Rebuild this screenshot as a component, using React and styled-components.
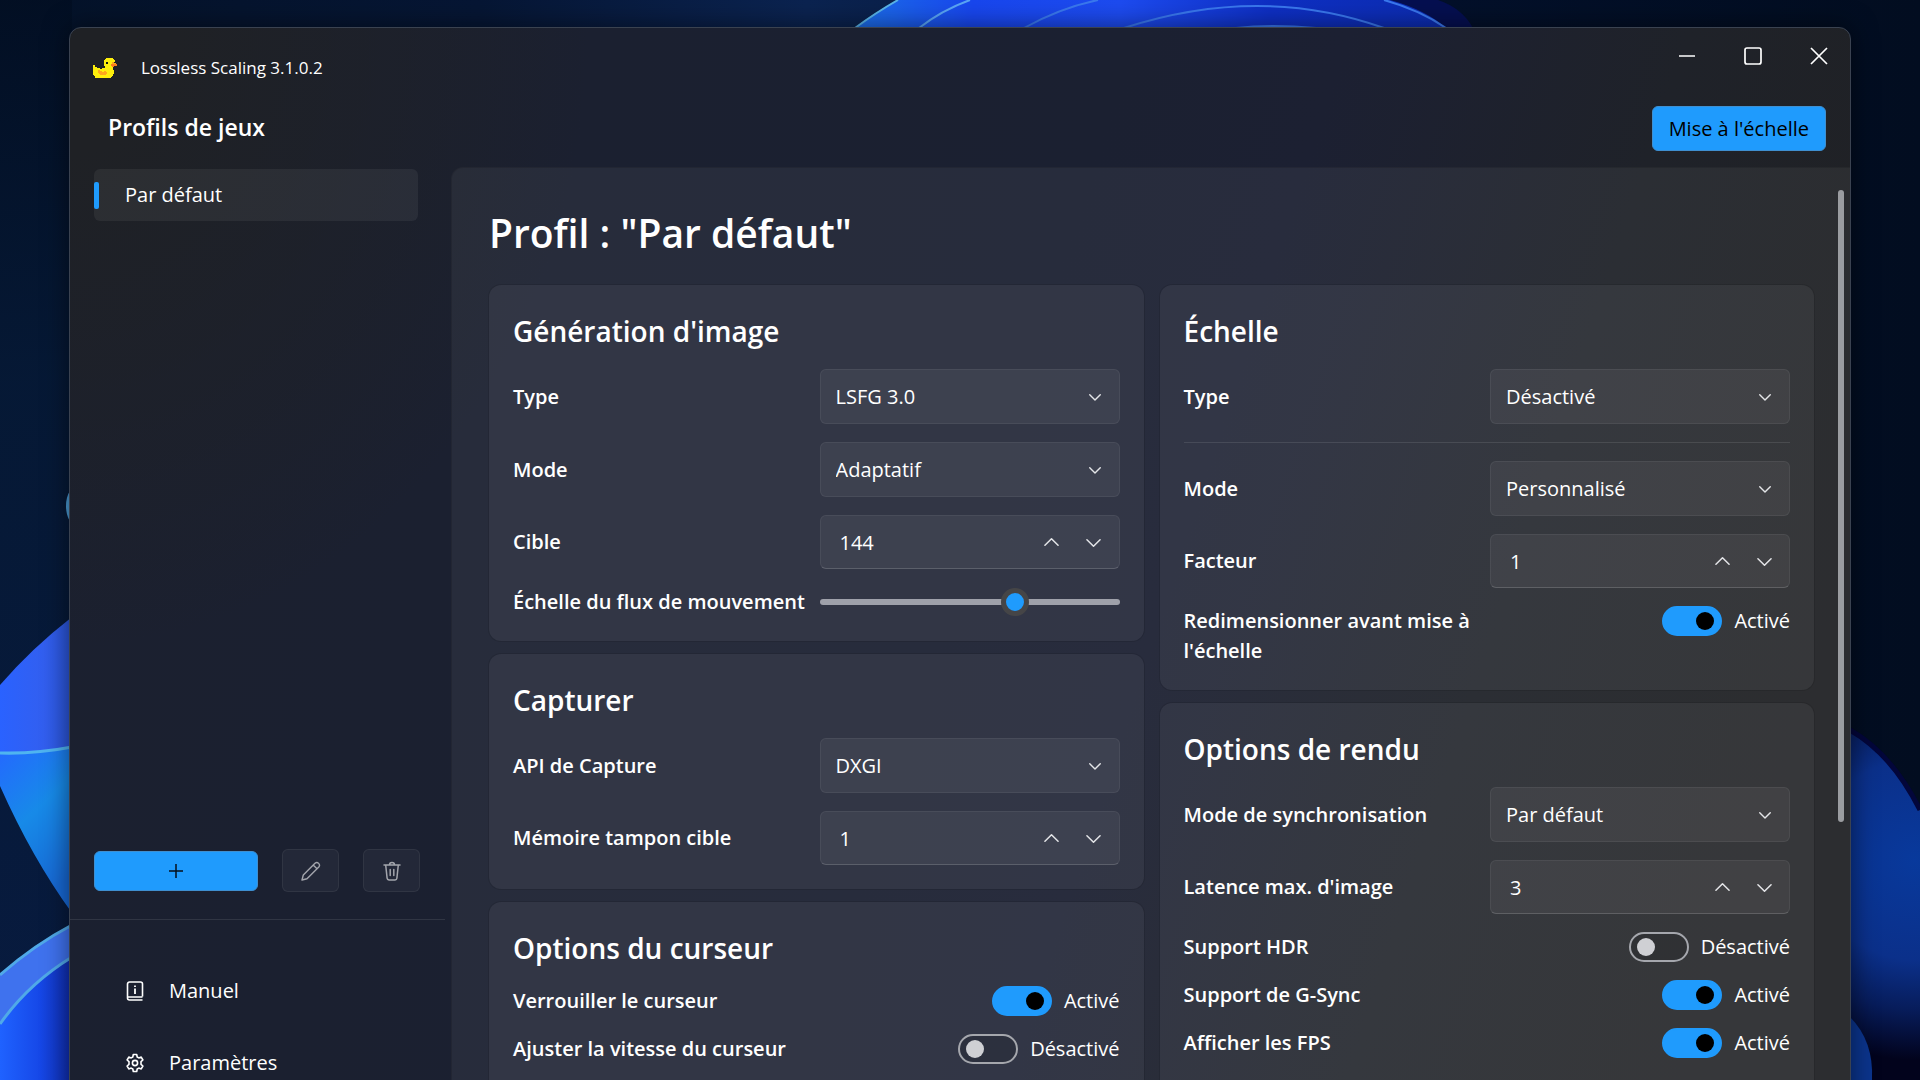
import { useState } from 'react';
import styled, { createGlobalStyle } from 'styled-components';

const accent = '#1f9bfd';

const GlobalStyle = createGlobalStyle`
  * {
    box-sizing: border-box;
  }

  body {
    margin: 0;
    overflow: hidden;
    background: #020b1c;
    color: #fff;
    font-family: 'Open Sans', 'Noto Sans', sans-serif;
    font-size: 20px;
    line-height: 30px;
  }

  h1, h2, ul {
    margin: 0;
    padding: 0;
  }

  button, input, select {
    margin: 0;
    color: inherit;
    font: inherit;
  }
`;

const Desktop = styled.div`
  position: relative;
  height: 100vh;
  padding: 27px 69px 0 69px;
  overflow: hidden;
`;

const Wallpaper = styled.svg`
  position: absolute;
  inset: 0;
  width: 100%;
  height: 100%;
`;

const Window = styled.div`
  position: relative;
  display: flex;
  flex-direction: column;
  height: calc(100vh + 8px);
  border: 1px solid #3a4250;
  border-radius: 12px;
  overflow: hidden;
  background:
    radial-gradient(ellipse 520px 620px at 0 0, #1f2125 20%, transparent 100%),
    linear-gradient(108deg, #1b202f 0%, #1b2031 50%, #1c2032 60%, #1f2229 76%, #202124 92%);
  box-shadow: 0 0 26px rgba(0, 0, 0, .5);
`;

const TitleBar = styled.header`
  display: flex;
  align-items: flex-start;
  gap: 4px;
  height: 56px;
  padding-left: 23px;
`;

const AppName = styled.div`
  display: flex;
  align-items: center;
  gap: 24px;
  flex: 1;
  height: 80px;
  font-size: 17px;
`;

const WindowButton = styled.button`
  display: flex;
  align-items: center;
  justify-content: center;
  width: 62px;
  height: 56px;
  padding: 0;
  border: none;
  background: transparent;
`;

const Toolbar = styled.div`
  display: flex;
  align-items: center;
  justify-content: space-between;
  height: 83px;
  padding: 6px 24px 0 38px;

  h2 {
    padding-bottom: 4px;
    font-size: 23px;
    font-weight: 600;
  }
`;

const ScaleButton = styled.button`
  height: 45px;
  padding: 0 16px;
  border: 1px solid #3f8fd0;
  border-radius: 6px;
  background: ${accent};
  color: #000;
`;

const Body = styled.div`
  display: grid;
  grid-template-columns: 381px 1fr;
  grid-template-rows: minmax(0, 1fr);
  flex: 1;
  min-height: 0;
`;

const Sidebar = styled.aside`
  display: flex;
  flex-direction: column;
`;

const ProfileList = styled.ul`
  flex: 1;
  padding: 2px 33px 0 24px;
  list-style: none;
`;

const Profile = styled.button`
  display: flex;
  align-items: center;
  gap: 26px;
  width: 100%;
  height: 52px;
  padding: 0;
  border: none;
  border-radius: 6px;
  background: rgba(255, 255, 255, .06);

  &::before {
    content: '';
    width: 5px;
    height: 27px;
    border-radius: 2px;
    background: ${accent};
  }
`;

const ProfileActions = styled.div`
  display: flex;
  align-items: center;
  gap: 24px;
  padding: 0 31px 27px 24px;
`;

const ActionButton = styled.button`
  display: flex;
  align-items: center;
  justify-content: center;
  flex: ${({ $primary }) => ($primary ? '1' : '0 0 57px')};
  height: ${({ $primary }) => ($primary ? '40px' : '43px')};
  padding: 0;
  border: 1px solid ${({ $primary }) => ($primary ? '#3f8fd0' : 'rgba(255, 255, 255, .06)')};
  border-radius: 6px;
  background: ${({ $primary }) => ($primary ? accent : 'rgba(255, 255, 255, .04)')};
  color: ${({ $primary }) => ($primary ? '#000' : '#a3a5ac')};
`;

const SideMenu = styled.nav`
  width: 375px;
  height: 195px;
  padding-top: 35px;
  border-top: 1px solid #303543;
`;

const MenuLink = styled.a`
  display: flex;
  align-items: center;
  gap: 24px;
  height: 72px;
  padding-left: 55px;
  color: inherit;
  text-decoration: none;
`;

const Content = styled.main`
  display: flex;
  align-items: flex-start;
  min-width: 0;
  padding: 0 6px 0 37px;
  border: 1px solid rgba(0, 0, 0, .12);
  border-right: none;
  border-top-left-radius: 12px;
  background: rgba(255, 255, 255, .055);
`;

const Settings = styled.div`
  flex: 1;
  padding-top: 37px;

  h1 {
    margin-bottom: 24px;
    font-size: 39px;
    font-weight: 600;
    line-height: 56px;
  }
`;

const Columns = styled.div`
  display: grid;
  grid-template-columns: 1fr 1fr;
  gap: 16px;
`;

const Column = styled.div`
  display: flex;
  flex-direction: column;
  gap: 13px;
`;

const ScrollBar = styled.div`
  width: 6px;
  height: 632px;
  margin: 22px 0 0 24px;
  border-radius: 3px;
  background: #9b9da1;
`;

const Card = styled.section`
  display: flex;
  flex-direction: column;
  gap: 18px;
  padding: 24px;
  border-radius: 12px;
  background: rgba(255, 255, 255, .05);
  box-shadow: 0 0 0 1px rgba(0, 0, 0, .1);

  h2 {
    margin-bottom: -2px;
    font-size: 28px;
    font-weight: 600;
    line-height: 44px;
  }

  &:last-child {
    padding-bottom: 48px;
  }
`;

const Divider = styled.hr`
  width: 100%;
  height: 1px;
  margin: 0;
  border: none;
  background: rgba(255, 255, 255, .1);
`;

const Row = styled.div`
  display: grid;
  grid-template-columns: 1fr 300px;
  align-items: ${({ $top }) => ($top ? 'start' : 'center')};

  > label {
    font-weight: 600;
  }
`;

const Field = styled.div`
  position: relative;
  display: flex;
  align-items: center;
  height: ${({ $number }) => ($number ? '54px' : '55px')};
  border: 1px solid rgba(255, 255, 255, .06);
  border-bottom-color: ${({ $number }) => ($number ? 'rgba(255, 255, 255, .16)' : 'rgba(255, 255, 255, .06)')};
  border-radius: 6px;
  background: rgba(255, 255, 255, .055);

  > svg {
    position: absolute;
    right: 18px;
    pointer-events: none;
  }
`;

const Dropdown = styled.select`
  width: 100%;
  height: 100%;
  padding: 0 40px 0 15px;
  border: none;
  appearance: none;
  background: transparent;
`;

const NumberInput = styled.input`
  flex: 1;
  min-width: 0;
  height: 100%;
  padding: 0 0 0 19px;
  border: none;
  appearance: textfield;
  background: transparent;

  &::-webkit-inner-spin-button {
    display: none;
  }
`;

const StepButton = styled.button`
  display: flex;
  align-items: center;
  justify-content: center;
  width: 42px;
  height: 40px;
  padding: 0;
  border: none;
  background: transparent;

  &:last-child {
    margin-right: 4px;
  }
`;

const Range = styled.input`
  width: 100%;
  height: 28px;
  appearance: none;
  background: transparent;

  &::-webkit-slider-runnable-track {
    height: 6px;
    border-radius: 3px;
    background: #9fa1aa;
  }

  &::-webkit-slider-thumb {
    width: 28px;
    height: 28px;
    margin-top: -11px;
    border: 5px solid #454547;
    border-radius: 50%;
    appearance: none;
    background: ${accent};
  }
`;

const ToggleBox = styled.div`
  display: flex;
  align-items: center;
  justify-content: flex-end;
  gap: 12px;
  height: 30px;
`;

const Switch = styled.input`
  display: flex;
  align-items: center;
  width: 60px;
  height: 30px;
  padding: 0 6px;
  border: 2px solid #a5a7ad;
  border-radius: 15px;
  appearance: none;
  background: rgba(0, 0, 0, .1);

  &::before {
    content: '';
    width: 18px;
    height: 18px;
    border-radius: 50%;
    background: #cfd0d4;
  }

  &:checked {
    justify-content: flex-end;
    border-color: ${accent};
    background: ${accent};
  }

  &:checked::before {
    background: #000;
  }
`;

const duckRows = [
  '.............yyyyyyy....',
  '............yyyyyyyyy...',
  '...........yyyyyyyyyyy..',
  '...........yyyyyyyyyyy..',
  '...........yykkyyyyoo...',
  '...........yykkyyyyoooo.',
  '...........yyyyyyyrrrrrr',
  'yy.........yyyyyyyrrrrrr',
  'yy..........yyyyyyyrr...',
  'yyyy........yyyyyyyy....',
  'yyyyyyy..yyyyyyyyyyy....',
  'yyyyyyyyyyyyyyyyyyyy....',
  'yyyyyooyyyyyyyyyyyyyy...',
  'yyyyyooooyyooyyyyyyyy...',
  'yyyyyoooooooooyyyyyyy...',
  'yyyyyyooooooooyyyyyyy...',
  'yyyyyyyooooooyyyyyyy....',
  '.yyyyyyyyyyyyyyyyyyy....',
  '..yyyyyyyyyyyyyyyyy.....',
  '..yyyyyyyyyyyyyyyy......',
];

const duckColors = {
  y: '#fdee0c',
  o: '#fda81c',
  r: '#fb7d1e',
  k: '#15150f',
};

function Duck() {
  return (
    <svg width="24" height="20" viewBox="0 0 24 20" shapeRendering="crispEdges">
      {duckRows.map((row, y) => row.split('').map((cell, x) => (
        cell === '.' ? null : <rect key={`${x}-${y}`} x={x} y={y} width="1" height="1" fill={duckColors[cell]} />
      )))}
    </svg>
  );
}

function Chevron({ up, size = 12 }) {
  return (
    <svg width={size} height={size} viewBox="0 0 16 16" fill="none" stroke="#e4e5e8" strokeWidth={size > 12 ? 1.6 : 1.9} strokeLinecap="round" strokeLinejoin="round">
      <path d={up ? 'M1 11 8 4l7 7' : 'M1 5l7 7 7-7'} />
    </svg>
  );
}

function SelectRow({ id, label, value }) {
  return (
    <Row>
      <label htmlFor={id}>{label}</label>
      <Field>
        <Dropdown id={id} defaultValue={value}>
          <option>{value}</option>
        </Dropdown>
        <Chevron />
      </Field>
    </Row>
  );
}

function NumberRow({ id, label, initial }) {
  const [value, setValue] = useState(initial);

  return (
    <Row>
      <label htmlFor={id}>{label}</label>
      <Field $number>
        <NumberInput id={id} type="number" value={value} onChange={(e) => setValue(Number(e.target.value))} />
        <StepButton type="button" aria-label="+" onClick={() => setValue(value + 1)}>
          <Chevron up size={15} />
        </StepButton>
        <StepButton type="button" aria-label="-" onClick={() => setValue(value - 1)}>
          <Chevron size={15} />
        </StepButton>
      </Field>
    </Row>
  );
}

function ToggleRow({ id, label, initial = false }) {
  const [on, setOn] = useState(initial);

  return (
    <Row $top>
      <label htmlFor={id}>{label}</label>
      <ToggleBox>
        <Switch id={id} type="checkbox" checked={on} onChange={() => setOn(!on)} />
        <span>{on ? 'Activé' : 'Désactivé'}</span>
      </ToggleBox>
    </Row>
  );
}

function Background() {
  return (
    <Wallpaper viewBox="0 0 1920 1080" preserveAspectRatio="none">
      <defs>
        <linearGradient id="sky" x1="0" x2="1">
          <stop offset="0" stopColor="#041228" />
          <stop offset=".25" stopColor="#061634" />
          <stop offset=".42" stopColor="#0b2350" />
          <stop offset=".75" stopColor="#03102a" />
          <stop offset="1" stopColor="#020d20" />
        </linearGradient>
        <linearGradient id="side" x1="0" y1="0" x2="0" y2="1">
          <stop offset="0" stopColor="#020e22" stopOpacity=".8" />
          <stop offset=".35" stopColor="#061a38" stopOpacity=".8" />
          <stop offset="1" stopColor="#081b40" />
        </linearGradient>
        <linearGradient id="top" x1="0" x2="1">
          <stop offset="0" stopColor="#1c6ee8" />
          <stop offset=".2" stopColor="#1846ee" />
          <stop offset=".45" stopColor="#1d4bf0" />
          <stop offset=".7" stopColor="#0e2fc4" />
          <stop offset="1" stopColor="#0c2cb0" />
        </linearGradient>
        <linearGradient id="petalA" x1="0" x2="1">
          <stop offset="0" stopColor="#2a62ff" />
          <stop offset=".6" stopColor="#325ff0" />
          <stop offset="1" stopColor="#2b55d8" />
        </linearGradient>
        <linearGradient id="petalB" x1="0" y1="0" x2=".4" y2="1">
          <stop offset="0" stopColor="#2468ff" />
          <stop offset=".5" stopColor="#178ae8" />
          <stop offset="1" stopColor="#1768d4" />
        </linearGradient>
        <linearGradient id="petalC" x1="0" x2="1">
          <stop offset="0" stopColor="#1f62ff" />
          <stop offset=".55" stopColor="#1648e8" />
          <stop offset="1" stopColor="#0f2cae" />
        </linearGradient>
        <radialGradient id="right" gradientUnits="userSpaceOnUse" cx="1915" cy="860" r="200">
          <stop offset="0" stopColor="#08399c" />
          <stop offset=".5" stopColor="#0b308a" />
          <stop offset=".75" stopColor="#071c5a" />
          <stop offset="1" stopColor="#02031c" />
        </radialGradient>
      </defs>
      <rect width="1920" height="1080" fill="url(#sky)" />
      <rect width="72" height="1080" fill="url(#side)" />

      <path d="M855 28Q875 12 898 0h540q24 8 35 28z" fill="#050f50" />
      <path d="M855 28Q875 12 898 0h492q36 10 56 28z" fill="url(#top)" />
      <g fill="none" stroke="#3a78ee" strokeWidth="2">
        <path d="M855 28Q877 12 898 0" stroke="#59b4e8" />
        <path d="M919 28Q942 10 970 0" stroke="#5aa5f5" />
        <path d="M1024 28Q1060 8 1098 0" />
        <path d="M1124 28Q1260-16 1384 28" />
        <path d="M1384 0q36 10 62 28" />
        <path d="M1236 28q35-4 80 0" />
      </g>

      <ellipse cx="80" cy="506" rx="14" ry="22" fill="#4a9ad4" />
      <path d="M0 685Q32 648 72 617v130Q36 754 0 753z" fill="url(#petalA)" />
      <path d="M0 753q36 1 72-6v166Q32 858 0 786z" fill="url(#petalB)" />
      <path d="M0 753q36 1 72-6" fill="none" stroke="#4fb4f0" strokeWidth="3" />
      <path d="M0 975q34-30 72-50v155H0z" fill="#3f72ee" />
      <path d="M0 1024q28-40 72-67v123H0z" fill="url(#petalC)" />
      <path d="M0 975q34-30 72-50M0 1024q28-40 72-67" fill="none" stroke="#50a9e8" strokeWidth="3" />

      <path d="M1850 730q42 24 70 80v270h-70z" fill="url(#right)" />
      <path d="M1850 730q42 24 70 80" fill="none" stroke="#03063a" strokeWidth="5" />
      <path d="M1850 1017q24 24 22 63h-22z" fill="#0b348c" />
    </Wallpaper>
  );
}

export default function App() {
  return (
    <>
      <GlobalStyle />
      <Desktop>
        <Background />
        <Window>
          <TitleBar>
            <AppName>
              <Duck />
              <span>Lossless Scaling 3.1.0.2</span>
            </AppName>
            <WindowButton type="button" aria-label="Réduire">
              <svg width="18" height="18" fill="none" stroke="#fff" strokeWidth="1.5"><path d="M1 9h16" /></svg>
            </WindowButton>
            <WindowButton type="button" aria-label="Agrandir">
              <svg width="18" height="18" fill="none" stroke="#fff" strokeWidth="1.7"><rect x="1" y="1" width="16" height="16" rx="2" /></svg>
            </WindowButton>
            <WindowButton type="button" aria-label="Fermer">
              <svg width="18" height="18" fill="none" stroke="#fff" strokeWidth="1.7"><path d="M1 1l16 16M17 1 1 17" /></svg>
            </WindowButton>
          </TitleBar>
          <Toolbar>
            <h2>Profils de jeux</h2>
            <ScaleButton type="button">Mise à l&apos;échelle</ScaleButton>
          </Toolbar>
          <Body>
            <Sidebar>
              <ProfileList>
                <li>
                  <Profile type="button">Par défaut</Profile>
                </li>
              </ProfileList>
              <ProfileActions>
                <ActionButton type="button" $primary aria-label="Ajouter">
                  <svg width="16" height="16" fill="none" stroke="#06101c" strokeWidth="1.5"><path d="M8 1v14M1 8h14" /></svg>
                </ActionButton>
                <ActionButton type="button" aria-label="Modifier">
                  <svg width="20" height="20" viewBox="0 0 20 20" fill="none" stroke="currentColor" strokeWidth="1.4" strokeLinejoin="round">
                    <path d="M1 19l1.3-5L14 2.2a2.7 2.7 0 0 1 3.8 3.8L6 17.7zM12.2 4l3.8 3.8" />
                  </svg>
                </ActionButton>
                <ActionButton type="button" aria-label="Supprimer">
                  <svg width="18" height="20" viewBox="0 0 18 20" fill="none" stroke="currentColor" strokeWidth="1.5" strokeLinecap="round" strokeLinejoin="round">
                    <path d="M1 4h16M6.5 4a2.5 2.5 0 0 1 5 0M2.7 4l1.4 13.2A2 2 0 0 0 6 19h6a2 2 0 0 0 1.9-1.8L15.3 4M7.2 8.5v6M10.8 8.5v6" />
                  </svg>
                </ActionButton>
              </ProfileActions>
              <SideMenu>
                <MenuLink href="#manuel">
                  <svg width="20" height="20" viewBox="0 0 20 20" fill="none" stroke="#fff" strokeWidth="1.6" strokeLinejoin="round">
                    <path d="M17.5 15.5V3a2 2 0 0 0-2-2h-11a2 2 0 0 0-2 2v14a2 2 0 0 0 2 2h13M2.5 16h15" />
                    <path d="M10 7.5V13M10 4.5V6" strokeWidth="1.8" />
                  </svg>
                  Manuel
                </MenuLink>
                <MenuLink href="#parametres">
                  <svg width="20" height="20" viewBox="0 0 20 20" fill="none" stroke="#fff" strokeWidth="1.6" strokeLinejoin="round">
                    <path d="M8.3 1.5h3.4l.5 2.5 1.6.9 2.4-.8 1.7 2.9L16 8.7v2.6l1.9 1.7-1.7 2.9-2.4-.8-1.6.9-.5 2.5H8.3L7.800 16l-1.600-.9-2.400.8L2.100 13 4 11.300V8.700L2.100 7l1.700-2.900 2.400.8L7.800 4z" />
                    <circle cx="10" cy="10" r="2.6" />
                  </svg>
                  Paramètres
                </MenuLink>
              </SideMenu>
            </Sidebar>
            <Content>
              <Settings>
                <h1>Profil : &quot;Par défaut&quot;</h1>
                <Columns>
                  <Column>
                    <Card>
                      <h2>Génération d&apos;image</h2>
                      <SelectRow id="gen-type" label="Type" value="LSFG 3.0" />
                      <SelectRow id="gen-mode" label="Mode" value="Adaptatif" />
                      <NumberRow id="gen-target" label="Cible" initial={144} />
                      <Row>
                        <label htmlFor="flow-scale">Échelle du flux de mouvement</label>
                        <Range id="flow-scale" type="range" min="25" max="100" step="5" defaultValue="75" />
                      </Row>
                    </Card>
                    <Card>
                      <h2>Capturer</h2>
                      <SelectRow id="capture-api" label="API de Capture" value="DXGI" />
                      <NumberRow id="queue-target" label="Mémoire tampon cible" initial={1} />
                    </Card>
                    <Card>
                      <h2>Options du curseur</h2>
                      <ToggleRow id="clip-cursor" label="Verrouiller le curseur" initial />
                      <ToggleRow id="cursor-speed" label="Ajuster la vitesse du curseur" />
                    </Card>
                  </Column>
                  <Column>
                    <Card>
                      <h2>Échelle</h2>
                      <SelectRow id="scale-type" label="Type" value="Désactivé" />
                      <Divider />
                      <SelectRow id="scale-mode" label="Mode" value="Personnalisé" />
                      <NumberRow id="scale-factor" label="Facteur" initial={1} />
                      <ToggleRow id="resize-before" label="Redimensionner avant mise à l'échelle" initial />
                    </Card>
                    <Card>
                      <h2>Options de rendu</h2>
                      <SelectRow id="sync-mode" label="Mode de synchronisation" value="Par défaut" />
                      <NumberRow id="max-latency" label="Latence max. d'image" initial={3} />
                      <ToggleRow id="hdr" label="Support HDR" />
                      <ToggleRow id="gsync" label="Support de G-Sync" initial />
                      <ToggleRow id="fps" label="Afficher les FPS" initial />
                    </Card>
                  </Column>
                </Columns>
              </Settings>
              <ScrollBar />
            </Content>
          </Body>
        </Window>
      </Desktop>
    </>
  );
}
